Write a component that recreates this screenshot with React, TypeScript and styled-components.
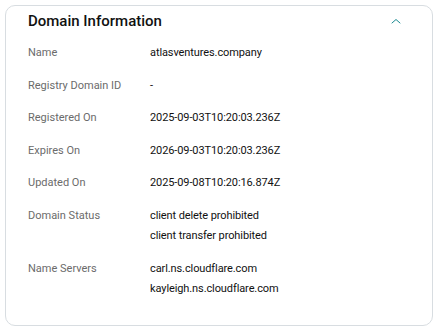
import React from 'react';
import styled, { createGlobalStyle } from 'styled-components';

const GlobalStyle = createGlobalStyle`
  html, body {
    margin: 0;
    padding: 0;
    background: #ffffff;
  }

  body {
    font-family: Roboto, "Liberation Sans", Arial, sans-serif;
    -webkit-font-smoothing: antialiased;
  }
`;

const Card = styled.section`
  border: 1px solid #d8dde1;
  border-radius: 10px;
  box-sizing: border-box;
  margin: 5px;
  padding: 4px 22px 25px 22px;
  width: 428px;
`;

const Header = styled.div`
  align-items: center;
  display: flex;
  height: 22px;
  justify-content: space-between;
  margin-bottom: 11px;
`;

const Title = styled.h2`
  color: #111111;
  font-size: 15px;
  font-weight: 500;
  line-height: 22px;
  margin: 0;
`;

const ToggleButton = styled.button`
  align-items: center;
  background: none;
  border: none;
  cursor: pointer;
  display: flex;
  height: 16px;
  justify-content: center;
  margin-right: 6px;
  padding: 0;
  width: 16px;
`;

const Rows = styled.dl`
  display: flex;
  flex-direction: column;
  gap: 12px;
  margin: 0;
`;

const Row = styled.div`
  display: grid;
  grid-template-columns: 122px 1fr;
`;

const Label = styled.dt`
  color: #6b6b6b;
  font-size: 11px;
  line-height: 20px;
`;

const Value = styled.dd`
  color: #111111;
  display: flex;
  flex-direction: column;
  font-size: 11px;
  letter-spacing: -0.1px;
  line-height: 20.5px;
  margin: 0;
`;

interface Field {
  label: string;
  values: string[];
}

const fields: Field[] = [
  { label: 'Name', values: ['atlasventures.company'] },
  { label: 'Registry Domain ID', values: ['-'] },
  { label: 'Registered On', values: ['2025-09-03T10:20:03.236Z'] },
  { label: 'Expires On', values: ['2026-09-03T10:20:03.236Z'] },
  { label: 'Updated On', values: ['2025-09-08T10:20:16.874Z'] },
  { label: 'Domain Status', values: ['client delete prohibited', 'client transfer prohibited'] },
  { label: 'Name Servers', values: ['carl.ns.cloudflare.com', 'kayleigh.ns.cloudflare.com'] }
];

const ChevronUp: React.FC = () => (
  <svg width="10" height="6" viewBox="0 0 10 6" fill="none">
    <path d="M1 5L5 1.5L9 5" stroke="#1a8a91" strokeWidth="1" strokeLinecap="round" strokeLinejoin="round" />
  </svg>
);

const App: React.FC = () => {
  return (
    <>
      <GlobalStyle />
      <Card>
        <Header>
          <Title>Domain Information</Title>
          <ToggleButton aria-label="Collapse">
            <ChevronUp />
          </ToggleButton>
        </Header>
        <Rows>
          {fields.map((field) => (
            <Row key={field.label}>
              <Label>{field.label}</Label>
              <Value>
                {field.values.map((value) => (
                  <span key={value}>{value}</span>
                ))}
              </Value>
            </Row>
          ))}
        </Rows>
      </Card>
    </>
  );
};

export default App;
